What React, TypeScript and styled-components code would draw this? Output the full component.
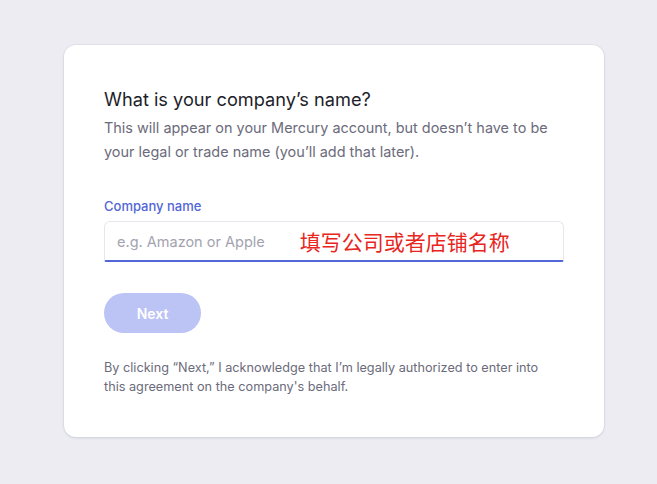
import React from "react";
import styled, { createGlobalStyle } from "styled-components";

const Global = createGlobalStyle`
  html, body { margin: 0; padding: 0; background: #ececf2; }
  body { font-family: Inter, "Noto Sans", sans-serif; -webkit-font-smoothing: antialiased; }
`;

const Page = styled.div`
  min-height: 484px;
  padding: 45px 0 0 64px;
  box-sizing: border-box;
`;

const Card = styled.div`
  width: 540px;
  height: 392px;
  box-sizing: border-box;
  background: #ffffff;
  border-radius: 12px;
  box-shadow: 0 1px 3px rgba(40, 40, 80, 0.12), 0 0 0 1px rgba(40, 40, 80, 0.03);
  padding: 41px 40px 0 40px;
  display: flex;
  flex-direction: column;
`;

const Title = styled.h1`
  margin: 0;
  font-size: 18.2px;
  line-height: 26px;
  font-weight: 400;
  color: #1e1e2a;
`;

const Subtitle = styled.p`
  margin: 4px 0 0 0;
  font-size: 14.45px;
  line-height: 24px;
  color: #6b6b7b;
`;

const Label = styled.label`
  margin-top: 34px;
  font-size: 13px;
  line-height: 16px;
  font-weight: 500;
  color: #5266d6;
`;

const InputBox = styled.div`
  margin-top: 7px;
  height: 41px;
  box-sizing: border-box;
  border: 1px solid #e6e6ee;
  border-bottom: 2px solid #5266d6;
  border-radius: 6px 6px 2px 2px;
  display: flex;
  align-items: center;
  padding: 0 12px;
  gap: 35px;
`;

const Placeholder = styled.span`
  font-size: 14.5px;
  color: #a3a3af;
`;

const Note = styled.span`
  font-family: "Noto Sans CJK SC", sans-serif;
  font-size: 21px;
  color: #e8261e;
`;

const Button = styled.button`
  margin-top: 31px;
  width: 97px;
  height: 40px;
  border: none;
  border-radius: 20px;
  background: #bcc3f5;
  color: #ffffff;
  font-family: inherit;
  font-size: 14px;
  font-weight: 600;
`;

const Disclaimer = styled.p`
  margin: 25px 0 0 0;
  font-size: 12.7px;
  line-height: 19px;
  color: #6b6b7b;
`;

export default function App() {
  return (
    <Page>
      <Global />
      <Card>
        <Title>What is your company’s name?</Title>
        <Subtitle>
          This will appear on your Mercury account, but doesn’t have to be
          <br />
          your legal or trade name (you’ll add that later).
        </Subtitle>
        <Label>Company name</Label>
        <InputBox>
          <Placeholder>e.g. Amazon or Apple</Placeholder>
          <Note>填写公司或者店铺名称</Note>
        </InputBox>
        <div>
          <Button>Next</Button>
        </div>
        <Disclaimer>
          By clicking “Next,” I acknowledge that I’m legally authorized to enter into
          <br />
          this agreement on the company's behalf.
        </Disclaimer>
      </Card>
    </Page>
  );
}
